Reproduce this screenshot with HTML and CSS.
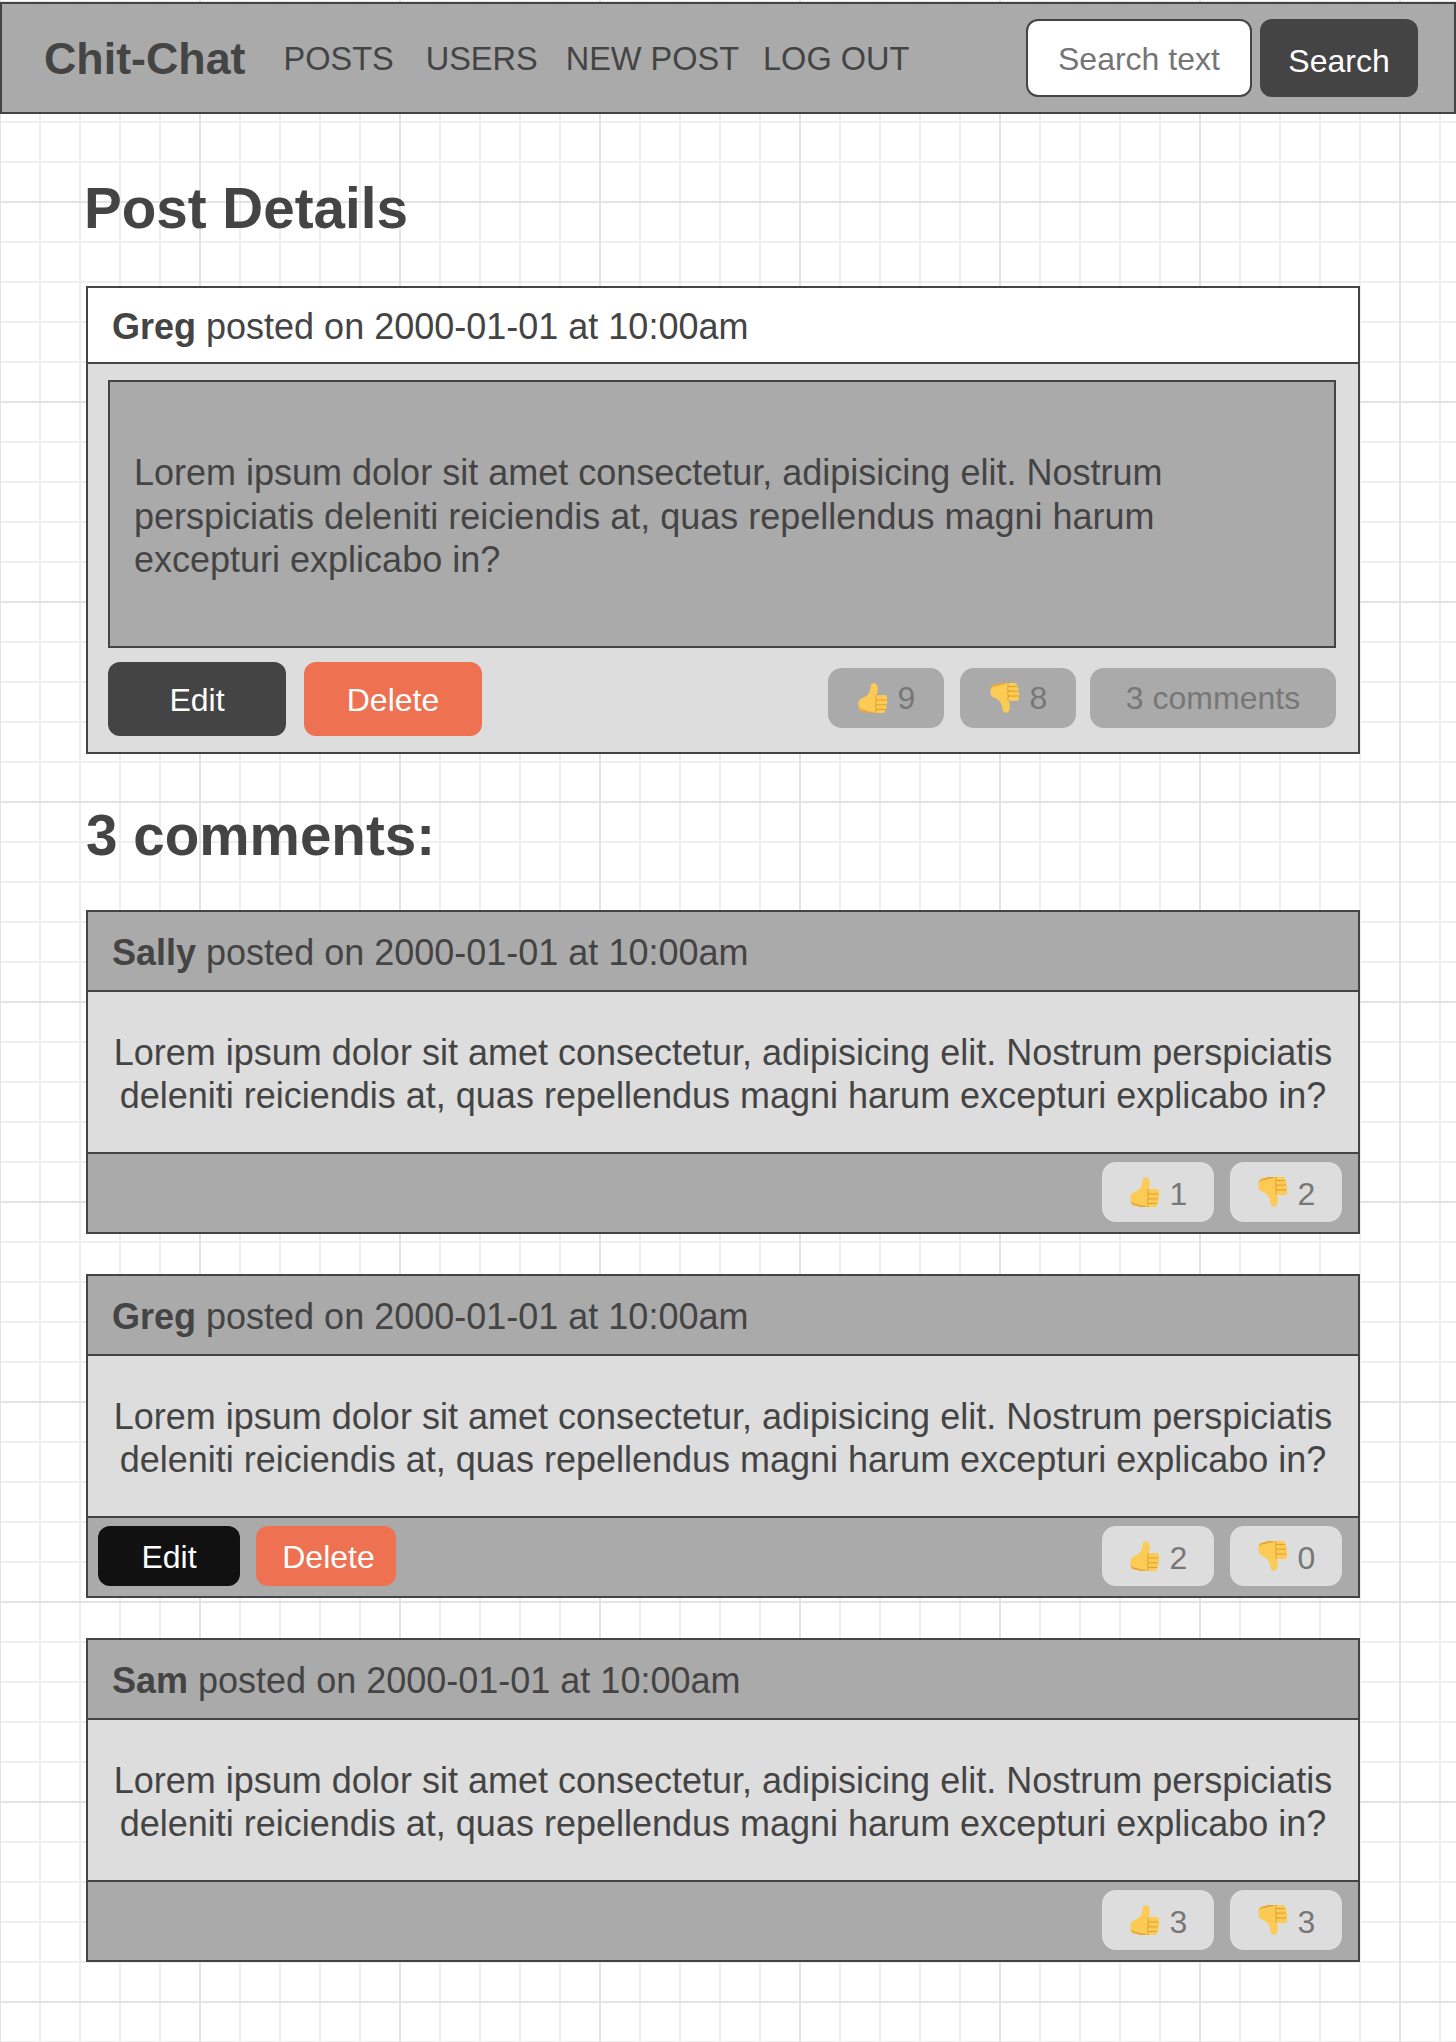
FILE: index.html
```html
<!DOCTYPE html>
<html lang="en">
<head>
<meta charset="utf-8">
<title>Chit-Chat</title>
<link rel="stylesheet" href="styles.css">
</head>
<body>
<svg class="defs" width="0" height="0" aria-hidden="true">
  <defs>
    <symbol id="thumb" viewBox="3 3.5 33 34">
      <path fill="#fbcb55" d="M4.6 26C4.9 21.5 8.6 20.8 11.6 19.2C15.6 16.8 17.2 12.4 17.7 7.6C18 4 22.9 3.6 24.4 7.3C25.8 10.8 25.2 14.6 23.8 17.6L32.5 17.4C35.2 17.4 35.6 21.4 34.4 22.6C35.8 24 35.4 27 34 27.8C35 29.4 34.6 32 33 32.6C33.6 34.6 32.4 36.6 30.4 36.6L15.4 36.6C13.4 36.6 12.4 35.2 9.6 35C6 34.8 4.4 32.4 4.6 26Z"/>
      <path fill="#e8a32f" d="M4.8 29C5.8 32.4 8.4 33 11 33.2C13.4 33.4 14.6 35 17 35L21 35.4L21 36.6L15.4 36.6C13.4 36.6 12.4 35.2 9.6 35C6.4 34.8 4.9 32.9 4.8 29Z"/>
      <g fill="none" stroke="#dc9a2c" stroke-width="1" stroke-linecap="round">
        <path d="M24 22.6L33.8 22.6"/>
        <path d="M23.6 27.8L33.6 27.8"/>
        <path d="M23.6 32.6L32.6 32.6"/>
        <path d="M23.8 17.8C22.6 19 22.6 21.4 24 22.6C22.6 24 22.6 26.6 23.6 27.8C22.6 29.2 22.6 31.4 23.6 32.6C22.8 33.8 22.8 35.4 23.6 36.2"/>
      </g>
    </symbol>
  </defs>
</svg>

<header class="topbar">
  <a class="brand" href="#">Chit-Chat</a>
  <nav class="nav">
    <a class="nav-link nav-posts" href="#">POSTS</a>
    <a class="nav-link nav-users" href="#">USERS</a>
    <a class="nav-link nav-new" href="#">NEW POST</a>
    <a class="nav-link nav-logout" href="#">LOG OUT</a>
  </nav>
  <form class="search">
    <input class="search-input" type="text" placeholder="Search text">
    <button class="search-button" type="button">Search</button>
  </form>
</header>

<main class="page">
  <h1 class="page-title">Post Details</h1>

  <article class="card">
    <div class="card-head post-head"><strong>Greg</strong> posted on 2000-01-01 at 10:00am</div>
    <div class="post-body">
      <p class="post-text">Lorem ipsum dolor sit amet consectetur, adipisicing elit. Nostrum perspiciatis deleniti reiciendis at, quas repellendus magni harum excepturi explicabo in?</p>
      <div class="post-actions">
        <div class="btn-group">
          <button class="btn btn-dark" type="button">Edit</button>
          <button class="btn btn-danger" type="button">Delete</button>
        </div>
        <div class="pill-group post-pills">
          <span class="pill pill-grey"><svg class="thumb"><use href="#thumb"/></svg>9</span>
          <span class="pill pill-grey"><svg class="thumb thumb-down"><use href="#thumb"/></svg>8</span>
          <span class="pill pill-grey pill-comments">3 comments</span>
        </div>
      </div>
    </div>
  </article>

  <h2 class="section-title">3 comments:</h2>

  <article class="card comment">
    <div class="card-head comment-head"><strong>Sally</strong> posted on 2000-01-01 at 10:00am</div>
    <p class="comment-text">Lorem ipsum dolor sit amet consectetur, adipisicing elit. Nostrum perspiciatis deleniti reiciendis at, quas repellendus magni harum excepturi explicabo in?</p>
    <div class="comment-foot">
      <div class="pill-group comment-pills">
        <span class="pill pill-light"><svg class="thumb"><use href="#thumb"/></svg>1</span>
        <span class="pill pill-light"><svg class="thumb thumb-down"><use href="#thumb"/></svg>2</span>
      </div>
    </div>
  </article>

  <article class="card comment">
    <div class="card-head comment-head"><strong>Greg</strong> posted on 2000-01-01 at 10:00am</div>
    <p class="comment-text">Lorem ipsum dolor sit amet consectetur, adipisicing elit. Nostrum perspiciatis deleniti reiciendis at, quas repellendus magni harum excepturi explicabo in?</p>
    <div class="comment-foot">
      <div class="btn-group comment-btns">
        <button class="btn btn-small btn-black" type="button">Edit</button>
        <button class="btn btn-small btn-danger" type="button">Delete</button>
      </div>
      <div class="pill-group comment-pills">
        <span class="pill pill-light"><svg class="thumb"><use href="#thumb"/></svg>2</span>
        <span class="pill pill-light"><svg class="thumb thumb-down"><use href="#thumb"/></svg>0</span>
      </div>
    </div>
  </article>

  <article class="card comment">
    <div class="card-head comment-head"><strong>Sam</strong> posted on 2000-01-01 at 10:00am</div>
    <p class="comment-text">Lorem ipsum dolor sit amet consectetur, adipisicing elit. Nostrum perspiciatis deleniti reiciendis at, quas repellendus magni harum excepturi explicabo in?</p>
    <div class="comment-foot">
      <div class="pill-group comment-pills">
        <span class="pill pill-light"><svg class="thumb"><use href="#thumb"/></svg>3</span>
        <span class="pill pill-light"><svg class="thumb thumb-down"><use href="#thumb"/></svg>3</span>
      </div>
    </div>
  </article>
</main>
</body>
</html>
```

FILE: styles.css
```css
* { box-sizing: border-box; }

html, body { margin: 0; }

body {
  min-height: 2042px;
  padding-top: 2px;
  color: #444;
  font-family: "Liberation Sans", Arial, sans-serif;
  font-size: 36px;
  line-height: 43.5px;
  background-color: #fff;
  background-image:
    linear-gradient(#e3e3e3 2px, transparent 2px),
    linear-gradient(90deg, #e3e3e3 2px, transparent 2px),
    linear-gradient(#eee 2px, transparent 2px),
    linear-gradient(90deg, #eee 2px, transparent 2px);
  background-size: 200px 200px, 200px 200px, 40px 40px, 40px 40px;
  background-position: 0 1px, -1px 0, 0 1px, -1px 0;
}

.defs { position: absolute; }

a { color: inherit; text-decoration: none; }

/* top bar */
.topbar {
  display: flex;
  align-items: center;
  height: 112px;
  padding: 0 36px 0 42px;
  background: #aaa;
  border: 2px solid #444;
}

.brand {
  font-size: 44.8px;
  font-weight: 700;
  line-height: 1;
}

.nav { display: flex; align-items: center; margin-left: 38px; padding-top: 2px; }

.nav-link { font-size: 32.5px; line-height: 1; }
.nav-users { margin-left: 32px; }
.nav-new { margin-left: 28px; }
.nav-logout { margin-left: 24px; }

.search { display: flex; margin-left: auto; gap: 8px; }

.search-input {
  width: 226px;
  height: 78px;
  padding: 3px 30px 0;
  border: 2px solid #444;
  border-radius: 12px;
  background: #fff;
  font: 32px "Liberation Sans", Arial, sans-serif;
  color: #444;
}

.search-input::placeholder { color: #757575; opacity: 1; }

.search-button {
  width: 158px;
  height: 78px;
  padding: 7px 0 0;
  border: 0;
  border-radius: 12px;
  background: #444;
  color: #fff;
  font: 32px "Liberation Sans", Arial, sans-serif;
}

/* page */
.page { padding: 0 96px 0 86px; }

.page-title {
  margin: 61px 0 0 -2px;
  font-size: 56.6px;
  line-height: 67px;
  font-weight: 700;
}

.section-title {
  margin: 48px 0 41px;
  font-size: 56.6px;
  line-height: 67px;
  font-weight: 700;
}

.card {
  border: 2px solid #444;
  background: #ddd;
}

.card-head { padding: 0 24px; }

.post-head {
  height: 76px;
  padding-top: 17px;
  background: #fff;
  border-bottom: 2px solid #444;
}

.page-title + .card { margin-top: 44px; }

.post-body { padding: 16px 22px 16px 20px; }

.post-text {
  margin: 0;
  height: 268px;
  padding: 69px 24px 0;
  background: #aaa;
  border: 2px solid #444;
}

.post-actions {
  display: flex;
  align-items: center;
  justify-content: space-between;
  margin-top: 14px;
}

.btn-group { display: flex; gap: 18px; }

.btn {
  width: 178px;
  height: 74px;
  padding: 2px 0 0;
  border: 0;
  border-radius: 12px;
  color: #fff;
  font: 32px "Liberation Sans", Arial, sans-serif;
}

.btn-dark { background: #444; }
.btn-black { background: #111; }
.btn-danger { background: #ee7152; }

.btn-small { width: 142px; height: 60px; padding-top: 3px; }
.btn-small.btn-danger { width: 140px; padding-left: 5px; }

.pill-group { display: flex; gap: 16px; }

.post-pills { margin-top: -2px; }

.pill {
  display: flex;
  align-items: center;
  justify-content: center;
  gap: 10px;
  width: 116px;
  height: 60px;
  padding-top: 2px;
  border-radius: 14px;
  color: #777;
  font-size: 32px;
}

.pill-grey { background: #aaa; }
.pill-light { background: #ddd; width: 112px; padding-top: 5px; }

.pill-comments { width: 246px; margin-left: -2px; }

.thumb { width: 31px; height: 32px; flex: none; margin-top: -2px; }
.pill-light .thumb { margin-top: -5px; }
.thumb-down { transform: scaleY(-1); }

/* comments */
.comment { margin-bottom: 40px; }

.comment-head {
  height: 80px;
  padding-top: 19px;
  background: #aaa;
  border-bottom: 2px solid #444;
}

.comment-text {
  margin: 0;
  height: 160px;
  padding: 39px 0 0;
  line-height: 43px;
  text-align: center;
}

.comment-foot {
  display: flex;
  align-items: flex-start;
  height: 80px;
  padding: 8px 16px 0 10px;
  background: #aaa;
  border-top: 2px solid #444;
}

.comment-btns { gap: 16px; }

.comment-pills { margin-left: auto; }
```
